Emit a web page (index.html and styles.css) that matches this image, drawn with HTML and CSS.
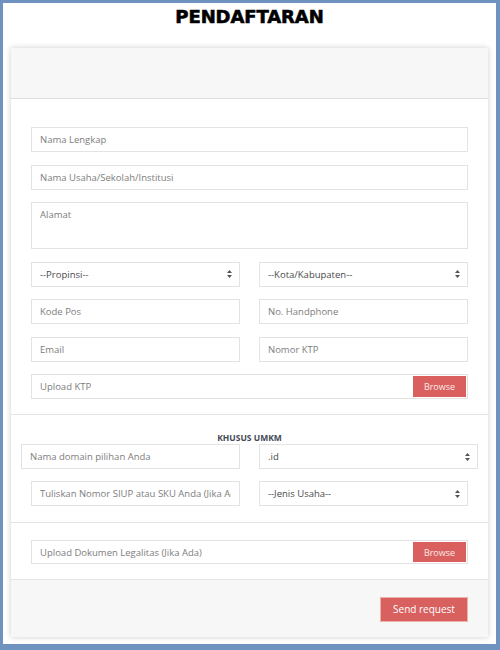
FILE: index.html
```html
<!DOCTYPE html>
<html>
<head>
<meta charset="utf-8">
<title>Pendaftaran</title>
<link rel="stylesheet" href="styles.css">
</head>
<body>
<div class="frame">
  <h1 class="title">PENDAFTARAN</h1>
  <div class="card">
    <div class="card-head"></div>
    <div class="section s1">
      <input class="field" type="text" placeholder="Nama Lengkap">
      <input class="field" type="text" placeholder="Nama Usaha/Sekolah/Institusi">
      <textarea class="field area" placeholder="Alamat"></textarea>
      <div class="row">
        <div class="sel"><select class="field"><option>--Propinsi--</option></select><svg class="arr" width="5" height="8" viewBox="0 0 5 8"><path d="M2.5 0 L5 3 L0 3 Z M0 5 L5 5 L2.5 8 Z" fill="#555"/></svg></div>
        <div class="sel"><select class="field"><option>--Kota/Kabupaten--</option></select><svg class="arr" width="5" height="8" viewBox="0 0 5 8"><path d="M2.5 0 L5 3 L0 3 Z M0 5 L5 5 L2.5 8 Z" fill="#555"/></svg></div>
      </div>
      <div class="row">
        <input class="field" type="text" placeholder="Kode Pos">
        <input class="field" type="text" placeholder="No. Handphone">
      </div>
      <div class="row">
        <input class="field" type="text" placeholder="Email">
        <input class="field" type="text" placeholder="Nomor KTP">
      </div>
      <div class="field file"><span class="ph">Upload KTP</span><button class="browse" type="button">Browse</button></div>
    </div>
    <div class="section s2">
      <div class="label">KHUSUS UMKM</div>
      <div class="row wide">
        <input class="field" type="text" placeholder="Nama domain pilihan Anda">
        <div class="sel"><select class="field"><option>.id</option></select><svg class="arr" width="5" height="8" viewBox="0 0 5 8"><path d="M2.5 0 L5 3 L0 3 Z M0 5 L5 5 L2.5 8 Z" fill="#555"/></svg></div>
      </div>
      <div class="row">
        <input class="field" type="text" placeholder="Tuliskan Nomor SIUP atau SKU Anda (Jika Ada)">
        <div class="sel"><select class="field"><option>--Jenis Usaha--</option></select><svg class="arr" width="5" height="8" viewBox="0 0 5 8"><path d="M2.5 0 L5 3 L0 3 Z M0 5 L5 5 L2.5 8 Z" fill="#555"/></svg></div>
      </div>
    </div>
    <div class="section s3">
      <div class="field file"><span class="ph">Upload Dokumen Legalitas (Jika Ada)</span><button class="browse" type="button">Browse</button></div>
    </div>
    <div class="card-foot">
      <button class="send" type="button">Send request</button>
    </div>
  </div>
</div>
</body>
</html>
```
FILE: styles.css
```css
* { box-sizing: border-box; }
html, body { margin: 0; padding: 0; }
body { font-family: "Open Sans", "Liberation Sans", sans-serif; background: #fff; }

.frame {
  height: 650px;
  border-style: solid;
  border-color: #7092be;
  border-width: 3px 4px 6px 3px;
  background: #fff;
  padding: 0 8px;
}

.title {
  margin: 0;
  padding-top: 3px;
  height: 45px;
  text-align: center;
  font-family: "DejaVu Sans", sans-serif;
  font-weight: bold;
  font-size: 18px;
  line-height: 22px;
  letter-spacing: -0.1px;
  color: #000;
  -webkit-text-stroke: 0.6px #000;
}

.card {
  background: #fff;
  box-shadow: 0 0 6px rgba(0, 0, 0, 0.2);
}

.card-head {
  height: 51px;
  background: #f7f7f7;
  border-bottom: 1px solid #dedede;
}

.section {
  display: flex;
  flex-direction: column;
  gap: 12.5px;
  border-bottom: 1px solid #e4e4e4;
}
.s1 { padding: 28px 20px 15px; }
.s2 { padding: 17px 20px 16px; gap: 0; }
.s2 .row + .row { margin-top: 12px; }
.s3 { padding: 17px 20px 15px; }

.field {
  display: block;
  width: 100%;
  height: 25px;
  margin: 0;
  border: 1px solid #e3e3e3;
  border-radius: 0;
  background: #fff;
  padding: 0 8px;
  font-family: "Open Sans", "Liberation Sans", sans-serif;
  font-size: 9.5px;
  color: #4a4a4a;
  outline: none;
}
.field::placeholder { color: #7d7d7d; }
.area { height: 47px; padding-top: 5px; resize: none; }

.row {
  display: grid;
  grid-template-columns: 1fr 1fr;
  column-gap: 19px;
}
.row.wide { margin: 0 -10px; }

.sel { position: relative; }
.sel select { appearance: none; -webkit-appearance: none; }
.arr { position: absolute; right: 8px; top: 8.5px; pointer-events: none; }

.file {
  display: flex;
  align-items: center;
  justify-content: space-between;
  padding: 0 1px 0 8px;
}
.s3 .file { height: 24px; }
.ph { color: #7d7d7d; font-size: 9.5px; }
.browse {
  width: 53px;
  height: 21px;
  border: none;
  background: #d9605e;
  color: #fbeaea;
  font-family: "Open Sans", "Liberation Sans", sans-serif;
  font-size: 9px;
  padding: 0;
}
.s3 .browse { height: 20px; }

.label {
  text-align: center;
  font-size: 8.5px;
  font-weight: bold;
  line-height: 12px;
  color: #444a55;
}

.card-foot {
  background: #f7f7f7;
  padding: 16px 20px 15px;
  text-align: right;
}
.send {
  width: 88px;
  height: 25px;
  background: #d8605f;
  border: 1px solid #eeb2a8;
  color: #fff;
  font-family: "Open Sans", "Liberation Sans", sans-serif;
  font-size: 10px;
  padding: 0;
}
```
